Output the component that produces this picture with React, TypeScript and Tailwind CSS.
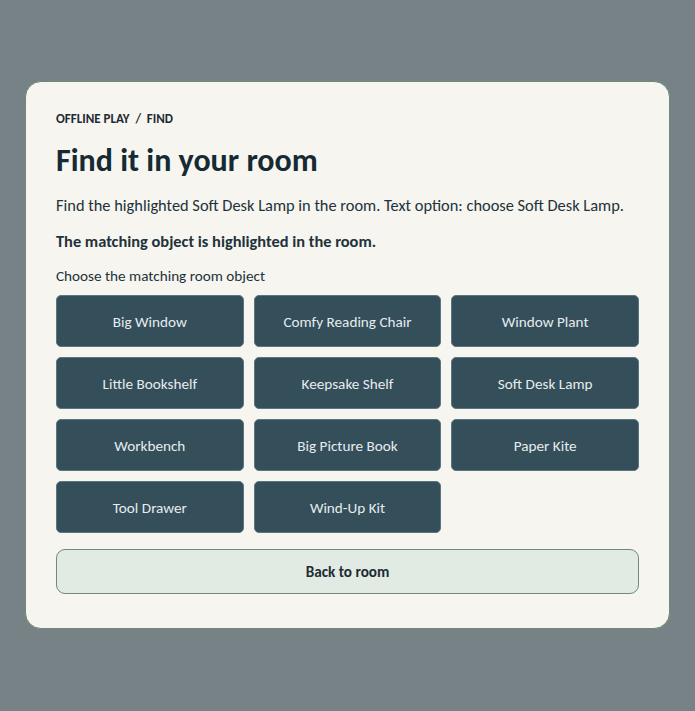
import React from "react";

const items = [
  "Big Window",
  "Comfy Reading Chair",
  "Window Plant",
  "Little Bookshelf",
  "Keepsake Shelf",
  "Soft Desk Lamp",
  "Workbench",
  "Big Picture Book",
  "Paper Kite",
  "Tool Drawer",
  "Wind-Up Kit",
];

export default function App() {
  return (
    <div
      className="min-h-[711px] w-full bg-[#778287] pt-[81px] px-[25px]"
      style={{ fontFamily: "Carlito, Calibri, Lato, 'Open Sans', sans-serif" }}
    >
      <div className="w-[645px] rounded-[16px] border border-[#6f8a72] bg-[#f6f5f0] px-[30px] pt-[29px] pb-[34px]">
        <div className="text-[13px] font-bold uppercase text-[#1d2b33] leading-[16px]">
          Offline play&nbsp;&nbsp;/&nbsp;&nbsp;Find
        </div>
        <h1 className="mt-[15px] text-[32px] font-bold leading-[38px] text-[#162a33]">
          Find it in your room
        </h1>
        <p className="mt-[14px] text-[16.4px] leading-[22px] text-[#22323a]">
          Find the highlighted Soft Desk Lamp in the room. Text option: choose Soft Desk Lamp.
        </p>
        <p className="mt-[14px] text-[16.4px] font-bold leading-[22px] text-[#22323a]">
          The matching object is highlighted in the room.
        </p>
        <div className="mt-[14px] text-[15.2px] leading-[20px] text-[#22323a]">
          Choose the matching room object
        </div>
        <div className="mt-[9px] grid grid-cols-3 gap-[10px]">
          {items.map((it) => (
            <button
              key={it}
              className="h-[52px] rounded-[5px] border border-[#5d7580] bg-[#344e5a] pt-[2px] text-[15.2px] text-[#e6ecee]"
            >
              {it}
            </button>
          ))}
        </div>
        <button className="mt-[16px] h-[45px] w-full rounded-[9px] border border-[#6f8a78] bg-[#e1ebe4] pt-[2px] text-[15.2px] font-bold text-[#1d2b33]">
          Back to room
        </button>
      </div>
    </div>
  );
}
